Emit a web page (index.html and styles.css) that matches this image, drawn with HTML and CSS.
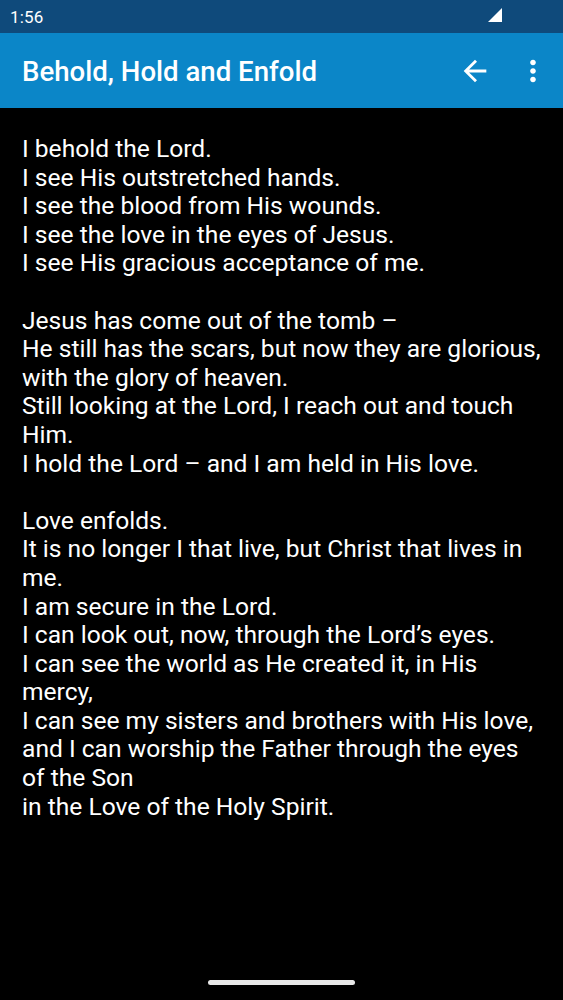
FILE: index.html
```html
<!DOCTYPE html>
<html>
<head>
<meta charset="utf-8">
<link rel="stylesheet" href="styles.css">
</head>
<body>
<div class="screen">
  <div class="status-bar">
    <span class="time">1:56</span>
    <svg class="signal" width="14" height="14" viewBox="0 0 14 14"><path d="M14 0 L14 14 L0 14 Z" fill="#fff"/></svg>
  </div>
  <header class="app-bar">
    <h1 class="title">Behold, Hold and Enfold</h1>
    <svg class="icon back" width="34" height="34" viewBox="0 0 24 24"><path d="M20 11H7.83l5.59-5.59L12 4l-8 8 8 8 1.41-1.41L7.83 13H20v-2z" fill="#fff"/></svg>
    <svg class="icon more" width="34" height="34" viewBox="0 0 24 24"><path d="M12 8c1.1 0 2-.9 2-2s-.9-2-2-2-2 .9-2 2 .9 2 2 2zm0 2c-1.1 0-2 .9-2 2s.9 2 2 2 2-.9 2-2-.9-2-2-2zm0 6c-1.1 0-2 .9-2 2s.9 2 2 2 2-.9 2-2-.9-2-2-2z" fill="#fff"/></svg>
  </header>
  <main class="content">
    <p class="stanza">I behold the Lord.<br>I see His outstretched hands.<br>I see the blood from His wounds.<br>I see the love in the eyes of Jesus.<br>I see His gracious acceptance of me.</p>
    <p class="stanza">Jesus has come out of the tomb –<br>He still has the scars, but now they are glorious,<br>with the glory of heaven.<br>Still looking at the Lord, I reach out and touch<br>Him.<br>I hold the Lord – and I am held in His love.</p>
    <p class="stanza">Love enfolds.<br>It is no longer I that live, but Christ that lives in<br>me.<br>I am secure in the Lord.<br>I can look out, now, through the Lord’s eyes.<br>I can see the world as He created it, in His<br>mercy,<br>I can see my sisters and brothers with His love,<br>and I can worship the Father through the eyes<br>of the Son<br>in the Love of the Holy Spirit.</p>
  </main>
  <div class="home-indicator"></div>
</div>
</body>
</html>
```
FILE: styles.css
```css
html, body {
  margin: 0;
  padding: 0;
  background: #000;
}
.screen {
  width: 563px;
  height: 1000px;
  background: #000;
  display: flex;
  flex-direction: column;
  font-family: Roboto, "Noto Sans", sans-serif;
  color: #fff;
  position: relative;
  overflow: hidden;
}
.status-bar {
  height: 33px;
  background: #0f4a7b;
  display: flex;
  align-items: center;
  justify-content: space-between;
  padding: 0 61px 0 10px;
  flex-shrink: 0;
}
.time {
  font-size: 17px;
  letter-spacing: 0.2px;
}
.signal {
  margin-top: -4px;
}
.app-bar {
  height: 75px;
  background: #0b86c8;
  display: flex;
  align-items: center;
  padding: 2px 13px 0 22px;
  flex-shrink: 0;
  box-sizing: border-box;
}
.title {
  margin: 0;
  font-size: 27.6px;
  font-weight: 500;
  flex: 1;
  letter-spacing: 0;
}
.icon {
  margin-top: -2px;
}
.icon.back {
  margin-right: 24px;
}
.content {
  padding: 27px 22px 0 22px;
  font-size: 24.6px;
  line-height: 28.6px;
}
.stanza {
  margin: 0 0 28.6px 0;
}
.home-indicator {
  position: absolute;
  left: 208px;
  top: 980px;
  width: 147px;
  height: 5px;
  border-radius: 3px;
  background: #e8e8e8;
}
```
